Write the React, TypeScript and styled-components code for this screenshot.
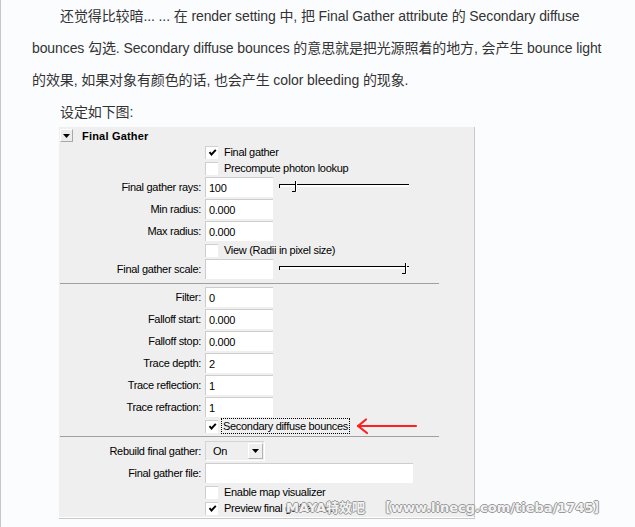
import React from "react";
import styled, { createGlobalStyle } from "styled-components";

const GlobalStyle = createGlobalStyle`
  html, body {
    margin: 0;
    padding: 0;
    background: #fbfcfe;
  }
`;

const Page = styled.div`
  position: relative;
  box-sizing: border-box;
  width: 635px;
  height: 527px;
  overflow: hidden;
  border-left: 1px solid #c6c7cd;
  padding-left: 31px;
  font-family: "Liberation Sans", "Noto Sans CJK SC", sans-serif;
`;

const Para = styled.p<{ $indent?: number }>`
  margin: 0;
  font-size: 14px;
  line-height: 32px;
  color: #333;
  white-space: nowrap;
  letter-spacing: -0.1px;
  text-indent: ${({ $indent }) => $indent ?? 28}px;
`;

const Panel = styled.div`
  position: relative;
  box-sizing: border-box;
  width: 416px;
  margin: -1px 0 0 27px;
  padding-bottom: 1px;
  background: #efefef;
  border-right: 1px solid #c8c8c8;
  border-bottom: 1px solid #ffffff;
  box-shadow: 0 1px 0 #c8c8c8;
  font-family: "Liberation Sans", sans-serif;
  font-size: 11px;
  letter-spacing: -0.3px;
  color: #000;
`;

const Header = styled.div`
  display: flex;
  align-items: center;
  height: 17px;
  padding-left: 1px;
`;

const CollapseButton = styled.div`
  box-sizing: border-box;
  width: 13px;
  height: 13px;
  display: flex;
  align-items: center;
  justify-content: center;
  background: #ececec;
  border: 1px solid;
  border-color: #ffffff #a8a8a8 #a8a8a8 #ffffff;
`;

const HeaderTitle = styled.span`
  margin-left: 9px;
  font-weight: bold;
  letter-spacing: 0.2px;
`;

const Section = styled.div<{ $top: number; $bottom: number }>`
  padding: ${({ $top, $bottom }) => `${$top}px 0 ${$bottom}px`};
`;

const Divider = styled.div`
  width: 379px;
  height: 1px;
  margin-left: 1px;
  background: #a0a0a0;
`;

const Row = styled.div<{ $h: number }>`
  display: grid;
  grid-template-columns: 142px 1fr;
  column-gap: 4px;
  align-items: center;
  height: ${({ $h }) => $h}px;
`;

const Label = styled.span`
  text-align: right;
  white-space: nowrap;
`;

const Controls = styled.div`
  display: flex;
  align-items: center;
`;

const Field = styled.div<{ $w?: number }>`
  box-sizing: border-box;
  width: ${({ $w }) => $w ?? 68}px;
  height: 20px;
  padding: 1px 0 0 3px;
  line-height: 18px;
  background: #fff;
  border-top: 1px solid #cdcdcd;
  border-left: 1px solid #cdcdcd;
  white-space: nowrap;
`;

const Box = styled.div`
  box-sizing: border-box;
  width: 13px;
  height: 13px;
  background: #fff;
  border-top: 1px solid #cfcfcf;
  border-left: 1px solid #cfcfcf;
  display: flex;
  align-items: center;
  justify-content: center;
`;

const BoxLabel = styled.span<{ $focus?: boolean }>`
  margin-left: ${({ $focus }) => ($focus ? 4 : 6)}px;
  padding: ${({ $focus }) => ($focus ? "0 1px" : "0")};
  line-height: 14px;
  outline: ${({ $focus }) => ($focus ? "1px dotted #000" : "none")};
  white-space: nowrap;
`;

const SliderWrap = styled.div`
  margin-left: 6px;
  display: flex;
`;

const Dropdown = styled.div`
  box-sizing: border-box;
  width: 60px;
  height: 20px;
  display: flex;
  align-items: center;
  justify-content: space-between;
  padding: 0 1px 0 7px;
  border: 1px solid;
  border-color: #d4d4d4 #ffffff #ffffff #d4d4d4;
`;

const DropButton = styled.div`
  box-sizing: border-box;
  width: 15px;
  height: 16px;
  display: flex;
  align-items: center;
  justify-content: center;
  border: 1px solid;
  border-color: #ffffff #b4b4b4 #b4b4b4 #ffffff;
`;

const ArrowMark = styled.svg`
  margin-left: 8px;
  overflow: visible;
`;

const Watermark = styled.div`
  position: absolute;
  left: 285px;
  top: 499px;
  display: flex;
  gap: 13px;
  font-family: "DejaVu Sans", "Noto Sans CJK SC", sans-serif;
  font-weight: bold;
  font-size: 13px;
  line-height: 18px;
  color: rgba(255, 255, 255, 0.9);
  white-space: nowrap;
  text-shadow: 1px 0 0 #9a9a9a, -1px 0 0 #9a9a9a, 0 1px 0 #9a9a9a, 0 -1px 0 #9a9a9a;
`;

const DownTriangle = () => (
  <svg width="7" height="4" viewBox="0 0 7 4">
    <path d="M0 0 H7 L3.5 4 Z" fill="#000" />
  </svg>
);

const Check = () => (
  <svg width="9" height="9" viewBox="0 0 9 9">
    <polyline points="1.5,4.2 3.5,6.5 7.8,1.8" fill="none" stroke="#000" strokeWidth="1.9" />
  </svg>
);

const Slider = ({ pos }: { pos: number }) => (
  <svg width="131" height="14" viewBox="0 0 131 14">
    <rect x="0" y="4" width="130" height="3" fill="#fff" />
    <line x1="0" y1="4.5" x2="130" y2="4.5" stroke="#000" strokeWidth="1" />
    <line x1="0.5" y1="4" x2="0.5" y2="8" stroke="#000" strokeWidth="1" />
    <path d={`M${pos - 3} 11.5 H${pos + 0.5} V1`} fill="none" stroke="#000" strokeWidth="1" />
    <line x1={pos + 1.5} y1="1" x2={pos + 1.5} y2="12" stroke="#fff" strokeWidth="1" />
  </svg>
);

const CheckRow = ({
  label,
  checked,
  focus,
  children,
}: {
  label: string;
  checked?: boolean;
  focus?: boolean;
  children?: React.ReactNode;
}) => (
  <Row $h={16}>
    <span />
    <Controls>
      <Box>{checked ? <Check /> : null}</Box>
      <BoxLabel $focus={focus}>{label}</BoxLabel>
      {children}
    </Controls>
  </Row>
);

const FieldRow = ({
  label,
  value,
  children,
}: {
  label: string;
  value?: string;
  children?: React.ReactNode;
}) => (
  <Row $h={22}>
    <Label>{label}</Label>
    <Controls>
      <Field>{value}</Field>
      {children}
    </Controls>
  </Row>
);

export default function App() {
  return (
    <>
      <GlobalStyle />
      <Page>
        <Para>
          还觉得比较暗... ... 在 render setting 中, 把 Final Gather attribute 的 Secondary diffuse
        </Para>
        <Para $indent={0}>
          bounces 勾选. Secondary diffuse bounces 的意思就是把光源照着的地方, 会产生 bounce light
        </Para>
        <Para $indent={0}>的效果, 如果对象有颜色的话, 也会产生 color bleeding 的现象.</Para>
        <Para>设定如下图:</Para>
        <Panel>
          <Header>
            <CollapseButton>
              <DownTriangle />
            </CollapseButton>
            <HeaderTitle>Final Gather</HeaderTitle>
          </Header>
          <Section $top={0} $bottom={3}>
            <CheckRow label="Final gather" checked />
            <CheckRow label="Precompute photon lookup" />
            <FieldRow label="Final gather rays:" value="100">
              <SliderWrap>
                <Slider pos={16} />
              </SliderWrap>
            </FieldRow>
            <FieldRow label="Min radius:" value="0.000" />
            <FieldRow label="Max radius:" value="0.000" />
            <CheckRow label="View (Radii in pixel size)" />
            <FieldRow label="Final gather scale:">
              <SliderWrap>
                <Slider pos={126} />
              </SliderWrap>
            </FieldRow>
          </Section>
          <Divider />
          <Section $top={2} $bottom={2}>
            <FieldRow label="Filter:" value="0" />
            <FieldRow label="Falloff start:" value="0.000" />
            <FieldRow label="Falloff stop:" value="0.000" />
            <FieldRow label="Trace depth:" value="2" />
            <FieldRow label="Trace reflection:" value="1" />
            <FieldRow label="Trace refraction:" value="1" />
            <CheckRow label="Secondary diffuse bounces" checked focus>
              <ArrowMark width="60" height="16" viewBox="0 0 60 16">
                <g fill="none" stroke="#ff2020" strokeWidth="2.2" strokeLinecap="round" strokeLinejoin="round">
                  <path d="M1 8 H59" />
                  <path d="M9 1.5 L1 8 L10 15" />
                </g>
              </ArrowMark>
            </CheckRow>
          </Section>
          <Divider />
          <Section $top={3} $bottom={0}>
            <Row $h={22}>
              <Label>Rebuild final gather:</Label>
              <Controls>
                <Dropdown>
                  <span>On</span>
                  <DropButton>
                    <DownTriangle />
                  </DropButton>
                </Dropdown>
              </Controls>
            </Row>
            <Row $h={22}>
              <Label>Final gather file:</Label>
              <Controls>
                <Field $w={208} />
              </Controls>
            </Row>
            <CheckRow label="Enable map visualizer" />
            <CheckRow label="Preview final gather tiles" checked />
          </Section>
        </Panel>
        <Watermark>
          <span>MAYA特效吧</span>
          <span>【www.linecg.com/tieba/1745】</span>
        </Watermark>
      </Page>
    </>
  );
}
